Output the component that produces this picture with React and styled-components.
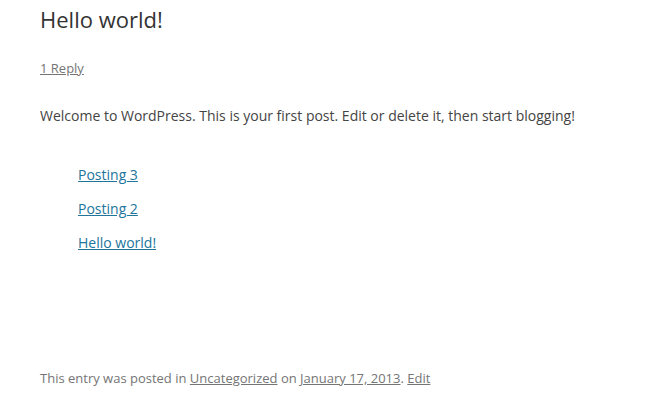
import styled, { createGlobalStyle } from "styled-components";

const GlobalStyle = createGlobalStyle`
  body {
    margin: 0;
    background: #ffffff;
    font-family: "Open Sans", "Liberation Sans", sans-serif;
    color: #444444;
  }
`;

const Article = styled.article`
  padding: 4px 40px 0 40px;
  width: 664px;
  height: 414px;
  box-sizing: border-box;
  display: flex;
  flex-direction: column;
`;

const Title = styled.h1`
  margin: 0;
  font-size: 22px;
  font-weight: 400;
  line-height: 30px;
  color: #333333;
`;

const Comments = styled.div`
  margin-top: 24px;
  font-size: 13px;
  line-height: 20px;

  a {
    color: #757575;
  }
`;

const Content = styled.div`
  margin-top: 26px;
  font-size: 14px;
  line-height: 24px;
  color: #444444;

  p {
    margin: 0;
  }
`;

const PostList = styled.ul`
  list-style: none;
  margin: 35px 0 0 0;
  padding: 0 0 0 38px;
  display: flex;
  flex-direction: column;
  gap: 10px;
`;

const PostItem = styled.li`
  line-height: 24px;

  a {
    color: #21759b;
  }
`;

const Footer = styled.footer`
  margin-top: auto;
  margin-bottom: 26px;
  font-size: 13px;
  line-height: 20px;
  color: #757575;

  a {
    color: #757575;
  }
`;

const posts = ["Posting 3", "Posting 2", "Hello world!"];

export default function App() {
  return (
    <>
      <GlobalStyle />
      <Article>
        <Title>Hello world!</Title>
        <Comments>
          <a href="#">1 Reply</a>
        </Comments>
        <Content>
          <p>Welcome to WordPress. This is your first post. Edit or delete it, then start blogging!</p>
          <PostList>
            {posts.map((p) => (
              <PostItem key={p}>
                <a href="#">{p}</a>
              </PostItem>
            ))}
          </PostList>
        </Content>
        <Footer>
          This entry was posted in <a href="#">Uncategorized</a> on{" "}
          <a href="#">January 17, 2013</a>. <a href="#">Edit</a>
        </Footer>
      </Article>
    </>
  );
}
